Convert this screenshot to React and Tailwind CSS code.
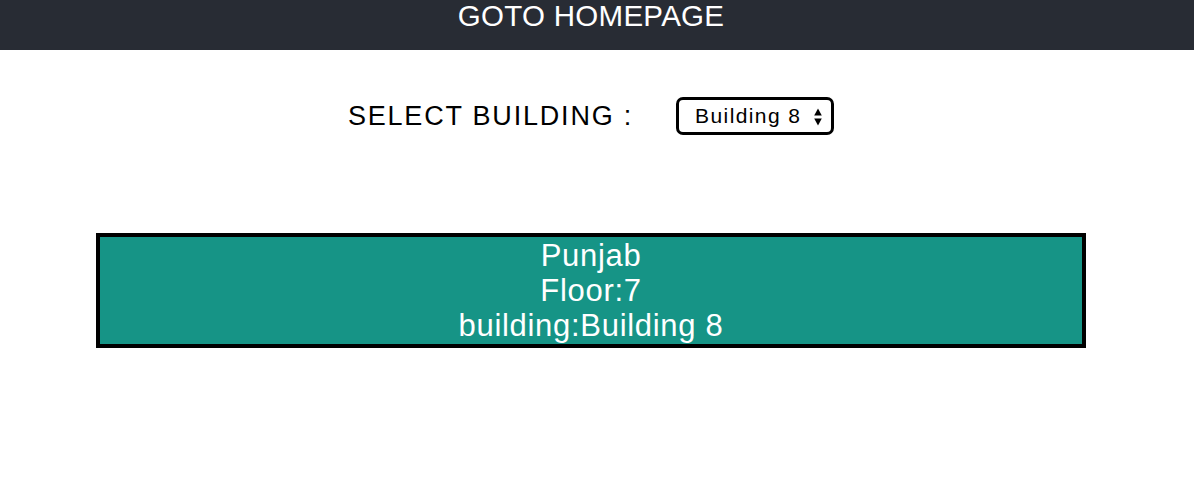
export default function App() {
  return (
    <div className="w-[1194px] h-[488px] bg-white" style={{ fontFamily: '"Liberation Sans", Arial, sans-serif' }}>
      <div className="h-[50px] bg-[#282c34]">
        <div className="w-[1182px] flex justify-center">
          <span className="text-white text-[29.5px] leading-[32px] tracking-[0.3px]">GOTO HOMEPAGE</span>
        </div>
      </div>
      <div className="w-[1182px]">
        <div className="flex justify-center items-center pt-[47px] gap-[43px]">
          <span className="text-black text-[27px] leading-[38px] tracking-[1.8px]">SELECT BUILDING :</span>
          <div className="relative w-[158px] shrink-0 h-[38px] border-[3px] border-black rounded-[7px] bg-white flex items-center">
            <select className="appearance-none bg-transparent outline-none text-[21px] tracking-[1.4px] text-black pl-[16px] w-full h-full" defaultValue="Building 8">
              <option>Building 8</option>
            </select>
            <svg className="absolute right-[9px] top-[8px] pointer-events-none" width="8" height="18" viewBox="0 0 8 18">
              <path d="M4 0.5 L7.8 7.5 L0.2 7.5 Z" fill="black" />
              <path d="M4 17.5 L7.8 10.5 L0.2 10.5 Z" fill="black" />
            </svg>
          </div>
        </div>
        <div className="px-[96px] pt-[98px]">
          <div className="border-4 border-black bg-[#169486] text-white text-center text-[31px] leading-[35px] tracking-[0.7px] pt-[1px] pb-[1px]">
            <div>Punjab</div>
            <div>Floor:7</div>
            <div>building:Building 8</div>
          </div>
        </div>
      </div>
    </div>
  );
}
